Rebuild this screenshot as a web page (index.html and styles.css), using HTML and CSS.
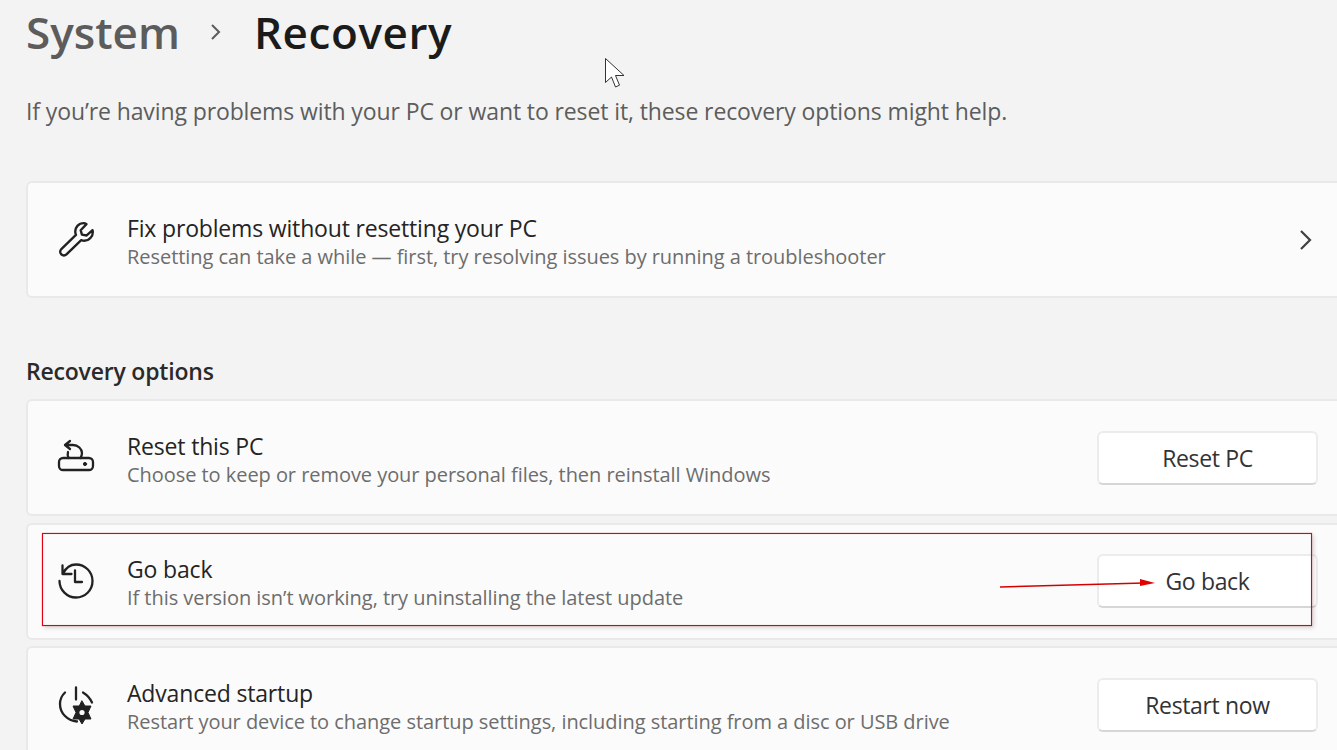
FILE: index.html
```html
<!DOCTYPE html>
<html lang="en">
<head>
    <meta charset="UTF-8">
    <meta name="viewport" content="width=device-width, initial-scale=1.0">
    <title>System - Recovery</title>
    <link rel="stylesheet" href="styles.css">
</head>
<body>
    <div class="page">
        <h1 class="crumbs">
            <span class="crumb-parent">System</span>
            <svg class="crumb-sep" width="12" height="20" viewBox="0 0 12 20"><path d="M2 3l7 7-7 7"/></svg>
            <span class="crumb-current">Recovery</span>
        </h1>
        <p class="intro">If you’re having problems with your PC or want to reset it, these recovery options might help.</p>

        <div class="card card-fix">
            <svg class="icon" width="40" height="40" viewBox="0 0 40 40"><path transform="translate(1 -0.5) scale(1.03)" d="M26 3.500c-5 0-8.700 4.200-8.200 9 .1 1 .3 1.700.6 2.500L4.200 28.800c-1.500 1.500-1.500 3.700 0 5.100 1.400 1.400 3.600 1.400 5 0L23.500 20c1 .4 1.900.6 3 .6 4.800 0 8.800-4.400 8.200-9.300l-.2-1-5.700 5.200-4.600-.8-1.200-4.300 5.600-5.900c-.8-.6-1.600-1-2.600-1z"/></svg>
            <div class="card-text">
                <div class="card-title">Fix problems without resetting your PC</div>
                <div class="card-sub">Resetting can take a while — first, try resolving issues by running a troubleshooter</div>
            </div>
            <svg class="chevron" width="14" height="22" viewBox="0 0 14 22"><path d="M2 2l9 9-9 9"/></svg>
        </div>

        <h2 class="section-title">Recovery options</h2>

        <div class="card-list">
            <div class="card">
                <svg class="icon" width="40" height="40" viewBox="0 0 40 40"><path d="M14 3l-5 4 5 4M9 7h8c5 0 9 4 9 8 0 2-.7 3.500-1.500 5M12 14c-.6 2-.4 4 .5 6"/><rect x="3" y="20" width="34" height="12" rx="4"/><circle class="fill" cx="29" cy="26" r="1.600"/></svg>
                <div class="card-text">
                    <div class="card-title">Reset this PC</div>
                    <div class="card-sub">Choose to keep or remove your personal files, then reinstall Windows</div>
                </div>
                <button class="btn">Reset PC</button>
            </div>

            <div class="card">
                <svg class="icon" width="40" height="40" viewBox="0 0 40 40"><path d="M6.500 4.500v8.500h9M7 12.500C9.800 7 14.500 3.500 20 3.500c9 0 16.500 7.300 16.500 16.500S29 36.500 20 36.500 3.500 29 3.500 20"/><path d="M19 9.500V21h7"/></svg>
                <div class="card-text">
                    <div class="card-title">Go back</div>
                    <div class="card-sub">If this version isn’t working, try uninstalling the latest update</div>
                </div>
                <button class="btn">Go back</button>
            </div>

            <div class="card">
                <svg class="icon" width="40" height="40" viewBox="0 0 40 40"><path d="M20 2.500v12M9 7.500C5.800 10.500 4 14.500 4 19c0 9 7 16.500 17 17.500M27 7.500c4 2.500 7 5.500 9 10"/><path class="fill" d="M26 16l3 5h6l-3 6.500 3 6.500h-6l-3 5-3-5h-6l3-6.500-3-6.500h6z"/><circle class="hole" cx="26" cy="27.500" r="2.600"/></svg>
                <div class="card-text">
                    <div class="card-title">Advanced startup</div>
                    <div class="card-sub">Restart your device to change startup settings, including starting from a disc or USB drive</div>
                </div>
                <button class="btn">Restart now</button>
            </div>
        </div>
    </div>

    <!-- annotation drawn over the screenshot -->
    <div class="mark-box"></div>
    <svg class="mark-arrow" width="160" height="14" viewBox="0 0 160 14"><path class="arrow-line" d="M1 11L145 7"/><path class="arrow-head" d="M141 3l15 4-15 3z"/></svg>
    <svg class="cursor" width="24" height="34" viewBox="0 0 24 34"><path d="M1.500 1.500v24l6-5.500 4 10 4-1.800-4-9.700h8.500z"/></svg>
</body>
</html>
```

FILE: styles.css
```css
* {
    margin: 0;
    padding: 0;
    box-sizing: border-box;
}

html, body {
    height: 750px;
    overflow: hidden;
}

body {
    font-family: "Open Sans", "Noto Sans", sans-serif;
    background: #f3f3f3;
    color: #1f1f1f;
    position: relative;
}

.page {
    padding-left: 26px;
    width: 1337px;
}

.crumbs {
    display: flex;
    align-items: center;
    height: 64px;
    font-size: 44px;
    font-weight: 600;
}

.crumb-parent {
    color: #5c5c5c;
}

.crumb-sep {
    margin: 0 32px 0 30px;
    fill: none;
    stroke: #5c5c5c;
    stroke-width: 2;
}

.crumb-current {
    color: #1b1b1b;
    letter-spacing: 0.6px;
}

.intro {
    margin-top: 29px;
    font-size: 23px;
    line-height: 36px;
    color: #5d5d5d;
    letter-spacing: -0.11px;
}

.card {
    display: flex;
    align-items: center;
    height: 117px;
    padding: 0 19px 0 28px;
    background: #fbfbfb;
    border: 2px solid #e9e9e9;
    border-right: 0;
    border-radius: 6px 0 0 6px;
}

.card-fix {
    margin-top: 52px;
}

.card-list {
    display: flex;
    flex-direction: column;
    gap: 6.5px;
}

.icon {
    flex: none;
    fill: none;
    stroke: #222;
    stroke-width: 2.3;
    stroke-linecap: round;
    stroke-linejoin: round;
}

.icon .fill {
    fill: #222;
    stroke-width: 1;
}

.icon .hole {
    fill: #fbfbfb;
    stroke: none;
}

.card-text {
    flex: 1;
    margin-left: 31px;
    padding-top: 4px;
}

.card-title {
    font-size: 23px;
    line-height: 29px;
    color: #242424;
    letter-spacing: -0.17px;
}

.card-sub {
    font-size: 20px;
    line-height: 27px;
    color: #6d6d6d;
    letter-spacing: -0.05px;
}

.chevron {
    margin-right: 5px;
    fill: none;
    stroke: #404040;
    stroke-width: 2.2;
}

.section-title {
    margin-top: 55px;
    margin-bottom: 9px;
    height: 37px;
    font-size: 23px;
    line-height: 37px;
    font-weight: 600;
    color: #2a2a2a;
    letter-spacing: -0.2px;
}

.btn {
    flex: none;
    width: 221px;
    height: 54px;
    font-family: inherit;
    font-size: 23px;
    color: #333;
    letter-spacing: -0.35px;
    background: #fff;
    border: 2px solid #ececec;
    border-bottom-color: #d6d6d6;
    border-radius: 6px;
}

.mark-box {
    position: absolute;
    left: 42px;
    top: 533px;
    width: 1270px;
    height: 93px;
    border: 1px solid #e00012;
    box-shadow: 0 0 1px rgba(220, 0, 0, 0.6), inset 0 0 1px rgba(220, 0, 0, 0.4), 2px 2px 4px rgba(0, 0, 0, 0.15);
}

.mark-arrow {
    position: absolute;
    left: 999px;
    top: 576px;
}

.arrow-line {
    fill: none;
    stroke: #d40000;
    stroke-width: 1.6;
}

.arrow-head {
    fill: #e00000;
}

.cursor {
    position: absolute;
    left: 604px;
    top: 57px;
    fill: #fff;
    stroke: #333;
    stroke-width: 1;
}
```
